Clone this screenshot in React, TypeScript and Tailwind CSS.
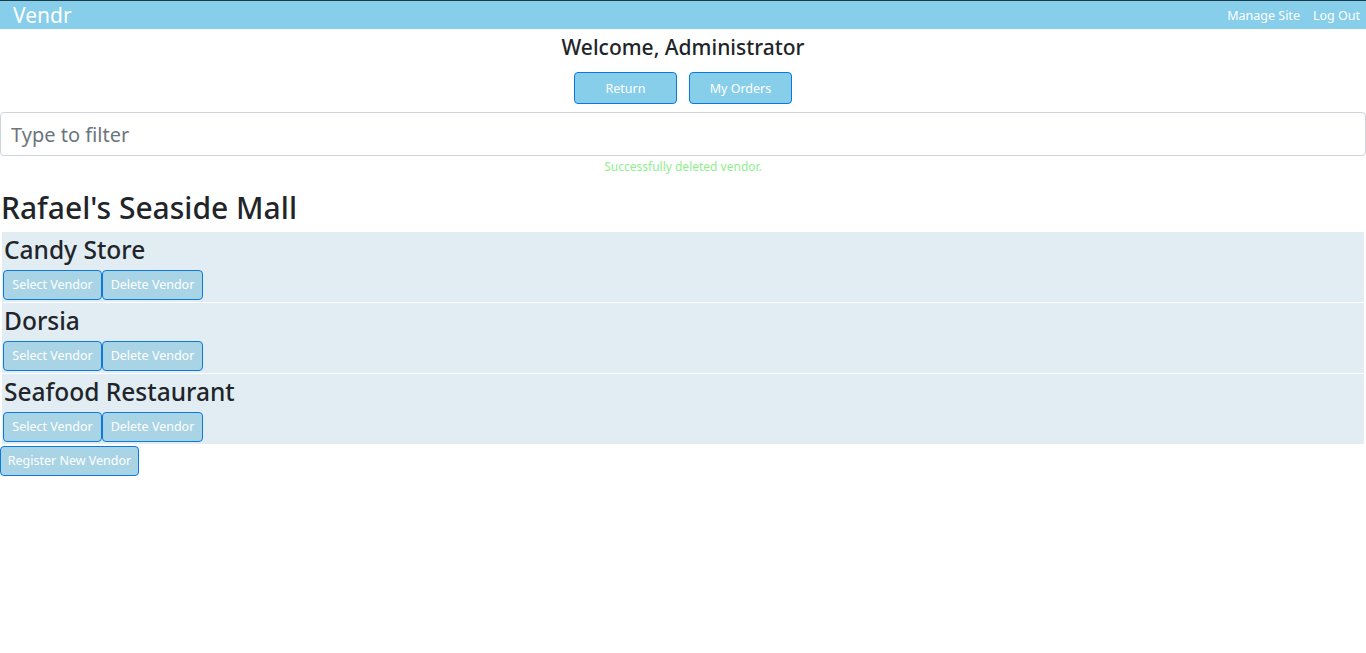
const vendors = ["Candy Store", "Dorsia", "Seafood Restaurant"];

function VendorRow({ name }: { name: string }) {
  return (
    <div className="mx-[2px] mb-px bg-[#e1edf3] pb-[2px]">
      <h2 className="h-[38px] pl-[2px] text-[24.5px] font-medium leading-[36px] text-[#212529]">
        {name}
      </h2>
      <div className="flex pl-px">
        <button className="h-[30px] w-[99px] rounded border border-[#0b7ae0] bg-[#a9d4e5] pt-px text-[12.5px] text-white">
          Select Vendor
        </button>
        <button className="h-[30px] w-[101px] rounded border border-[#0b7ae0] bg-[#a9d4e5] pt-px text-[12.5px] text-white">
          Delete Vendor
        </button>
      </div>
    </div>
  );
}

export default function App() {
  return (
    <div className="min-h-[653px] bg-white font-['Noto_Sans',sans-serif] text-[#212529]">
      <nav className="flex h-[29px] items-center justify-between border-t border-[#1c3d4c] bg-[#87ceeb] pl-[13px] pr-[6px] text-white">
        <span className="text-[21px] leading-none">Vendr</span>
        <div className="flex gap-[13px] pt-[2px] text-[12.5px]">
          <a>Manage Site</a>
          <a>Log Out</a>
        </div>
      </nav>
      <h1 className="mt-px text-center text-[21px] font-medium leading-[34px]">
        Welcome, Administrator
      </h1>
      <div className="mt-[8px] flex justify-center gap-[12px]">
        <button className="h-[32px] w-[103px] rounded border border-[#0b7ae0] bg-[#87ceeb] pt-[2px] text-[12.5px] text-white">
          Return
        </button>
        <button className="h-[32px] w-[103px] rounded border border-[#0b7ae0] bg-[#87ceeb] pt-[2px] text-[12.5px] text-white">
          My Orders
        </button>
      </div>
      <input
        placeholder="Type to filter"
        className="mt-[8px] block h-[44px] w-full rounded border border-[#ced4da] px-[10px] text-[20px] placeholder:text-[#6c757d] outline-none"
      />
      <p className="mt-[3px] text-center text-[12px] leading-[16px] text-[#90ee90]">
        Successfully deleted vendor.
      </p>
      <h1 className="mt-[11px] mb-[2px] pl-px text-[30px] font-medium leading-[44px]">
        Rafael's Seaside Mall
      </h1>
      {vendors.map((v) => (
        <VendorRow key={v} name={v} />
      ))}
      <button className="mt-px h-[30px] w-[139px] rounded border border-[#0b7ae0] bg-[#a9d4e5] pt-px text-[12.5px] text-white">
        Register New Vendor
      </button>
    </div>
  );
}
